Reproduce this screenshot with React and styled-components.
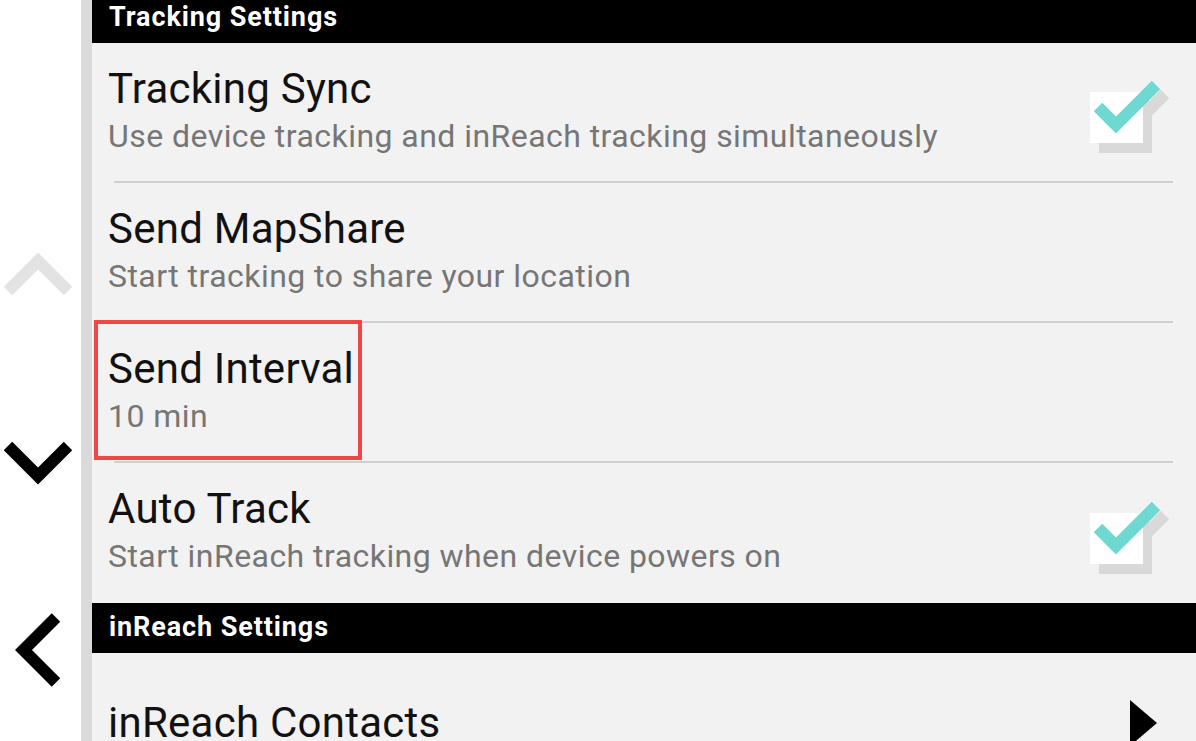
import React from "react";
import styled, { createGlobalStyle } from "styled-components";

const GlobalStyle = createGlobalStyle`
  html, body {
    margin: 0;
    padding: 0;
    background: #ffffff;
    font-family: Roboto, "Liberation Sans", sans-serif;
  }
`;

const Screen = styled.div`
  display: flex;
  width: 1196px;
  height: 741px;
  overflow: hidden;
  background: #ffffff;
`;

const Nav = styled.div`
  width: 81px;
  flex-shrink: 0;
  display: flex;
  flex-direction: column;
`;

const NavIcon = styled.svg`
  display: block;
  margin-top: ${(props) => props.offset}px;
`;

const Stripe = styled.div`
  width: 11px;
  flex-shrink: 0;
  background: #dadada;
`;

const Content = styled.div`
  flex: 1;
  background: #f2f2f2;
  display: flex;
  flex-direction: column;
`;

// list is scrolled a little, the first header is partly hidden
const List = styled.div`
  margin-top: -7px;
  display: flex;
  flex-direction: column;
`;

const SectionHeader = styled.div`
  height: 50px;
  line-height: 48px;
  background: #000000;
  color: #ffffff;
  font-size: 27px;
  font-weight: 700;
  letter-spacing: 0.9px;
  padding-left: 17px;
  flex-shrink: 0;
`;

const Row = styled.div`
  position: relative;
  height: ${(props) => props.h}px;
  flex-shrink: 0;
  display: flex;
  align-items: ${(props) => (props.single ? "center" : "flex-start")};
  padding-left: 16px;
  box-sizing: border-box;
`;

const TextBlock = styled.div`
  flex: 1;
  display: flex;
  flex-direction: column;
  padding-top: ${(props) => (props.single ? 0 : 23)}px;
`;

const Title = styled.div`
  font-size: 42px;
  line-height: 46px;
  letter-spacing: 0.25px;
  color: #111111;
  white-space: nowrap;
`;

const Subtitle = styled.div`
  font-size: 32px;
  line-height: 40px;
  letter-spacing: 0.45px;
  margin-top: 4px;
  color: #767676;
  white-space: nowrap;
`;

const Divider = styled.div`
  height: 2px;
  background: #d0d0d0;
  margin: 0 23px 0 22px;
  flex-shrink: 0;
`;

const CheckWrap = styled.svg`
  align-self: center;
  margin-top: 4px;
  margin-right: 21px;
  flex-shrink: 0;
`;

const Arrow = styled.svg`
  margin-right: 39px;
  flex-shrink: 0;
`;

const Highlight = styled.div`
  position: absolute;
  left: 2px;
  top: -3px;
  width: 268px;
  height: 140px;
  border: 4px solid #f04646;
  box-sizing: border-box;
  pointer-events: none;
`;

function CheckBox() {
  return (
    <CheckWrap width="90" height="90" viewBox="0 0 90 90">
      <rect x="14" y="32" width="53" height="52" fill="#d9d9d9" />
      <polyline
        points="22,47 40,65 80,25"
        fill="none"
        stroke="#d9d9d9"
        strokeWidth="12"
      />
      <rect x="5" y="23" width="53" height="51" fill="#ffffff" />
      <polyline
        points="13,38 31,56 71,16"
        fill="none"
        stroke="#6fd9d1"
        strokeWidth="12"
      />
    </CheckWrap>
  );
}

function SettingRow(props) {
  const single = !props.subtitle;
  return (
    <Row single={single} h={props.height || 138}>
      <TextBlock single={single}>
        <Title>{props.title}</Title>
        {props.subtitle && <Subtitle>{props.subtitle}</Subtitle>}
      </TextBlock>
      {props.checked && <CheckBox />}
      {props.arrow && (
        <Arrow width="27" height="46" viewBox="0 0 27 46">
          <polygon points="0,0 27,23 0,46" fill="#000000" />
        </Arrow>
      )}
      {props.highlight && <Highlight />}
    </Row>
  );
}

export default function App() {
  return (
    <>
      <GlobalStyle />
      <Screen>
        <Nav>
          <NavIcon offset={248} width="81" height="52" viewBox="0 0 81 52">
            <polyline
              points="8,43 38,13 68,43"
              fill="none"
              stroke="#e3e3e3"
              strokeWidth="12"
            />
          </NavIcon>
          <NavIcon offset={136} width="81" height="52" viewBox="0 0 81 52">
            <polyline
              points="8,10 38,40 68,10"
              fill="none"
              stroke="#000000"
              strokeWidth="12"
            />
          </NavIcon>
          <NavIcon offset={122} width="81" height="80" viewBox="0 0 81 80">
            <polyline
              points="56,7.5 23.5,40 56,72.5"
              fill="none"
              stroke="#000000"
              strokeWidth="12"
            />
          </NavIcon>
        </Nav>
        <Stripe />
        <Content>
          <List>
            <SectionHeader>Tracking Settings</SectionHeader>
            <SettingRow
              title="Tracking Sync"
              subtitle="Use device tracking and inReach tracking simultaneously"
              checked
            />
            <Divider />
            <SettingRow
              title="Send MapShare"
              subtitle="Start tracking to share your location"
            />
            <Divider />
            <SettingRow title="Send Interval" subtitle="10 min" highlight />
            <Divider />
            <SettingRow
              title="Auto Track"
              subtitle="Start inReach tracking when device powers on"
              height={140}
              checked
            />
            <SectionHeader>inReach Settings</SectionHeader>
            <SettingRow title="inReach Contacts" height={140} arrow />
          </List>
        </Content>
      </Screen>
    </>
  );
}
